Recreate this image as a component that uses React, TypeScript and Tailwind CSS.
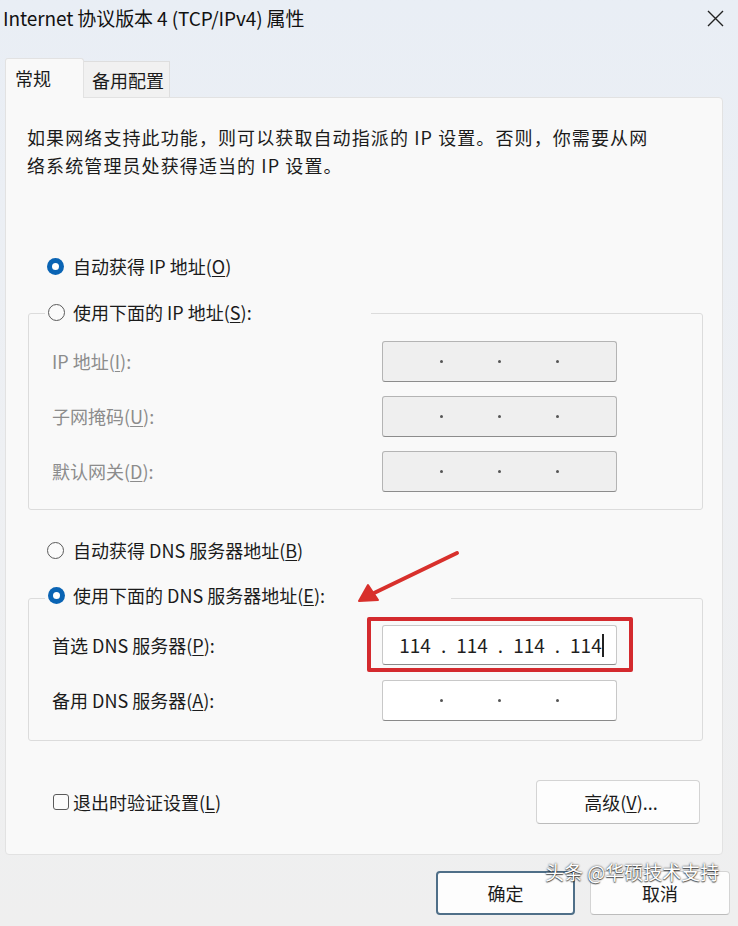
const font = { fontFamily: '"Noto Sans CJK SC", "Noto Sans", sans-serif' };

function Radio({ checked }: { checked?: boolean }) {
  return checked ? (
    <span className="flex h-[17px] w-[17px] shrink-0 items-center justify-center rounded-full bg-[#0a64b4]">
      <span className="h-[7px] w-[7px] rounded-full bg-white" />
    </span>
  ) : (
    <span className="h-[17px] w-[17px] shrink-0 rounded-full border border-[#5a5a5a] bg-[#fbfbfb]" />
  );
}

function EmptyIp({ disabled }: { disabled?: boolean }) {
  return (
    <div
      className={
        disabled
          ? "flex h-[41px] w-[235px] items-center justify-center gap-[55px] rounded-[3px] border border-[#b4b4b4] border-b-[#8c8c8c] bg-[#efefef]"
          : "flex h-[41px] w-[235px] items-center justify-center gap-[55px] rounded-[3px] border border-[#c8c8c8] border-b-[#8a8a8a] bg-white"
      }
    >
      <span className="h-[3px] w-[3px] rounded-full bg-[#555]" />
      <span className="h-[3px] w-[3px] rounded-full bg-[#555]" />
      <span className="h-[3px] w-[3px] rounded-full bg-[#555]" />
    </div>
  );
}

function Row({ label, u, tail, gray, children }: { label: string; u: string; tail: string; gray?: boolean; children: React.ReactNode }) {
  return (
    <div className="flex items-center">
      <span className={`w-[353px] pl-[23px] ${gray ? "text-[#8c8c8c]" : "text-[#1b1b1b]"}`}>
        {label}(<u className="underline-offset-2">{u}</u>){tail}
      </span>
      {children}
    </div>
  );
}

export default function App() {
  return (
    <div
      style={font}
      className="relative flex h-[926px] w-[738px] flex-col overflow-hidden bg-gradient-to-b from-[#e9eef5] via-[#eef0f3] to-[#efefef] text-[18px] text-[#1b1b1b]"
    >
      {/* title bar */}
      <div className="flex h-[36px] items-center justify-between pl-[3px] pr-[14px]">
        <span className="text-[19px] tracking-[-0.1px] text-[#111]">Internet 协议版本 4 (TCP/IPv4) 属性</span>
        <svg width="17" height="17" viewBox="0 0 17 17" className="mt-[1px]">
          <path d="M1 1L16 16M16 1L1 16" stroke="#222" strokeWidth="1.4" />
        </svg>
      </div>

      {/* tabs */}
      <div className="ml-[5px] mt-[22px] flex h-[39px] items-end">
        <div className="relative z-10 -mb-px flex h-[40px] w-[79px] items-center rounded-t-[3px] border border-b-0 border-[#e2e2e2] bg-[#f9f9f9] pl-[9px] pb-[1px]">
          常规
        </div>
        <div className="flex h-[36px] w-[86px] items-center border border-b-0 border-l-0 border-[#dedede] bg-[#f1f1f1] pl-[8px] pt-[1px]">
          备用配置
        </div>
      </div>

      {/* panel */}
      <div className="ml-[5px] flex w-[718px] flex-col rounded-b-[4px] rounded-tr-[4px] border border-[#e2e2e2] bg-[#f9f9f9]">
        <p className="mt-[25px] whitespace-nowrap pl-[21px] leading-[28px] tracking-[1.1px]">
          如果网络支持此功能，则可以获取自动指派的 IP 设置。否则，你需要从网
          <br />
          络系统管理员处获得适当的 IP 设置。
        </p>

        <div className="ml-[41px] mt-[72px] flex h-[30px] items-center gap-[9px]">
          <Radio checked />
          <span>
            自动获得 IP 地址(<u className="underline-offset-2">O</u>)
          </span>
        </div>

        {/* static IP group */}
        <div className="ml-[22px] mt-[32px] w-[675px] rounded-[3px] border border-[#dcdcdc] pb-[17px]">
          <div className="-mt-[17px] ml-[16px] flex h-[30px] w-[326px] items-center gap-[8px] bg-[#f9f9f9] pl-[3px]">
            <Radio />
            <span>
              使用下面的 IP 地址(<u className="underline-offset-2">S</u>):
            </span>
          </div>
          <div className="mt-[14px] flex flex-col gap-[14px]">
            <Row label="IP 地址" u="I" tail=":" gray>
              <EmptyIp disabled />
            </Row>
            <Row label="子网掩码" u="U" tail=":" gray>
              <EmptyIp disabled />
            </Row>
            <Row label="默认网关" u="D" tail=":" gray>
              <EmptyIp disabled />
            </Row>
          </div>
        </div>

        <div className="ml-[41px] mt-[25px] flex h-[30px] items-center gap-[9px]">
          <Radio />
          <span>
            自动获得 DNS 服务器地址(<u className="underline-offset-2">B</u>)
          </span>
        </div>

        {/* DNS group */}
        <div className="ml-[22px] mt-[33px] w-[675px] rounded-[3px] border border-[#dcdcdc] pb-[19px]">
          <div className="-mt-[19px] ml-[16px] flex h-[30px] w-[406px] items-center gap-[8px] bg-[#f9f9f9] pl-[3px]">
            <Radio checked />
            <span>
              使用下面的 DNS 服务器地址(<u className="underline-offset-2">E</u>):
            </span>
          </div>
          <div className="mt-[15px] flex flex-col gap-[15px]">
            <Row label="首选 DNS 服务器" u="P" tail=":">
              <div className="relative">
                <div className="flex h-[40px] w-[235px] items-center justify-center gap-[10px] rounded-[3px] border border-[#c8c8c8] border-b-[#8a8a8a] bg-white pl-[2px] text-[19px] text-[#1f1f1f]">
                  <span>114</span>
                  <span>.</span>
                  <span>114</span>
                  <span>.</span>
                  <span>114</span>
                  <span>.</span>
                  <span className="relative">
                    114
                    <span className="absolute -right-[2px] top-[3px] h-[23px] w-[1.5px] bg-[#222]" />
                  </span>
                </div>
                <div className="pointer-events-none absolute -bottom-[7px] -left-[15px] -right-[16px] -top-[8px] rounded-[2px] border-4 border-[#d42a2e]" />
              </div>
            </Row>
            <Row label="备用 DNS 服务器" u="A" tail=":">
              <EmptyIp />
            </Row>
          </div>
        </div>

        <div className="mt-[39px] flex h-[44px] items-center justify-between pl-[47px] pr-[22px]">
          <div className="flex items-center gap-[4px]">
            <span className="h-[16px] w-[16px] shrink-0 rounded-[3px] border border-[#5a5a5a] bg-[#fbfbfb]" />
            <span>
              退出时验证设置(<u className="underline-offset-2">L</u>)
            </span>
          </div>
          <button className="flex h-[44px] w-[164px] items-center justify-center rounded-[4px] border border-[#d4d4d4] border-b-[#bcbcbc] bg-[#fdfdfd] pl-[6px]">
            高级(<u className="underline-offset-2">V</u>)...
          </button>
        </div>
        <div className="h-[30px]" />
      </div>

      {/* dialog buttons */}
      <div className="mt-[16px] flex justify-end gap-[15px] pr-[8px]">
        <button className="flex h-[44px] w-[139px] items-center justify-center rounded-[4px] border-2 border-[#4f6f88] bg-[#fdfdfd]">
          确定
        </button>
        <button className="flex h-[44px] w-[140px] items-center justify-center rounded-[4px] border border-[#d4d4d4] border-b-[#bcbcbc] bg-[#fdfdfd]">
          取消
        </button>
      </div>

      {/* annotation arrow */}
      <svg className="pointer-events-none absolute left-[350px] top-[545px]" width="120" height="65" viewBox="350 545 120 65">
        <path d="M457 553 L372 594" stroke="#d8302c" strokeWidth="4" strokeLinecap="round" />
        <path d="M359 601 L368 585 L378 600 Z" fill="#d8302c" stroke="#d8302c" strokeWidth="2" strokeLinejoin="round" />
      </svg>

      {/* watermark */}
      <div
        className="pointer-events-none absolute left-[545px] top-[858px] text-[19px] text-white [text-shadow:0_0_2px_rgba(0,0,0,0.85),0_1px_1px_rgba(0,0,0,0.6)]"
      >
        头条 @华硕技术支持
      </div>
    </div>
  );
}
